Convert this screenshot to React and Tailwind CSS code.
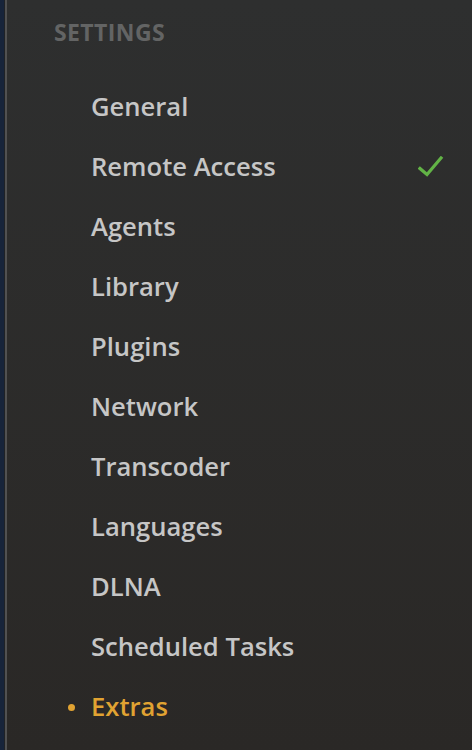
import React from 'react';

const items = [
  { label: 'General' },
  { label: 'Remote Access', check: true },
  { label: 'Agents' },
  { label: 'Library' },
  { label: 'Plugins' },
  { label: 'Network' },
  { label: 'Transcoder' },
  { label: 'Languages' },
  { label: 'DLNA' },
  { label: 'Scheduled Tasks' },
  { label: 'Extras', active: true },
];

const Check = () => (
  <svg width="26" height="22" viewBox="0 0 26 22" fill="none">
    <path d="M2 12.5 L9 18.5 L23 2" stroke="#62b346" strokeWidth="3.2" strokeLinecap="square" />
  </svg>
);

export default function App() {
  return (
    <div
      className="flex min-h-[750px] w-[472px] bg-[#2c2c2b]"
      style={{ fontFamily: '"Open Sans", "Noto Sans", sans-serif' }}
    >
      <div className="w-[4px] shrink-0 bg-[#17243a]" />
      <div className="w-[1px] shrink-0 bg-[#1f2226]" />
      <div className="w-[2px] shrink-0 bg-[#515151]" />
      <div className="flex-1 bg-gradient-to-b from-[#2e2f2f] to-[#2a2826] pt-[17px]">
        <h2 className="pl-[47px] text-[23px] font-bold leading-[30px] tracking-[0.4px] text-[#636464]">
          SETTINGS
        </h2>
        <ul className="mt-[42px] flex flex-col gap-[24px]">
          {items.map((item) => (
            <li key={item.label} className="relative flex h-[36px] items-center pl-[84px] pr-[28px]">
              {item.active && (
                <span className="absolute left-[61px] top-[15px] h-[7px] w-[7px] rounded-full bg-[#e1a332]" />
              )}
              <span
                className={`flex-1 text-[25.6px] font-semibold leading-[36px] ${
                  item.active ? 'text-[#e1a332]' : 'text-[#c6c6c6]'
                }`}
              >
                {item.label}
              </span>
              {item.check && <Check />}
            </li>
          ))}
        </ul>
      </div>
    </div>
  );
}
